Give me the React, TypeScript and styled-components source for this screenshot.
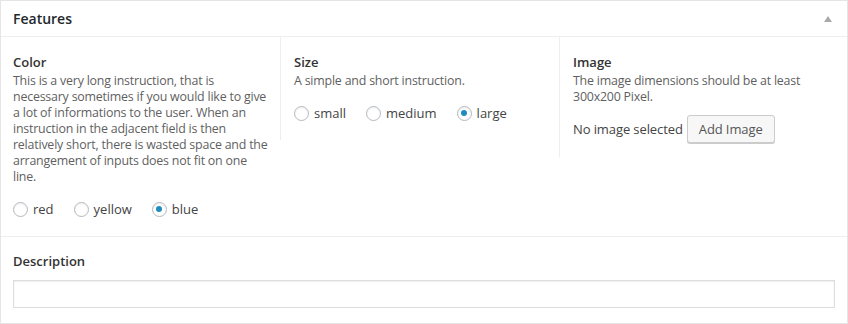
import styled, { createGlobalStyle } from "styled-components";

const GlobalStyle = createGlobalStyle`
  html, body {
    margin: 0;
    padding: 0;
    background: #ffffff;
  }
  body {
    font-family: "Open Sans", "Liberation Sans", sans-serif;
    font-size: 13px;
    color: #444;
  }
`;

const Postbox = styled.div`
  width: 848px;
  height: 324px;
  box-sizing: border-box;
  border: 1px solid #e5e5e5;
  background: #fff;
`;

const BoxHeader = styled.div`
  height: 35px;
  border-bottom: 1px solid #eee;
  display: flex;
  align-items: center;
  justify-content: space-between;
  padding: 0 15px 0 12px;
`;

const BoxTitle = styled.h2`
  margin: 0;
  font-size: 14px;
  font-weight: 600;
  color: #23282d;
`;

const Toggle = styled.span`
  width: 0;
  height: 0;
  border-left: 4px solid transparent;
  border-right: 4px solid transparent;
  border-bottom: 6px solid #aaa;
`;

const FieldRow = styled.div`
  display: flex;
  align-items: flex-start;
`;

interface FieldProps {
  $width: number;
  $divider?: boolean;
  $padBottom?: number;
}

const Field = styled.div<FieldProps>`
  box-sizing: border-box;
  width: ${({ $width }) => $width}px;
  padding: 16px 12px ${({ $padBottom }) => ($padBottom !== undefined ? $padBottom : 18)}px 12px;
  border-left: ${({ $divider }) => ($divider ? "1px solid #eee" : "none")};
  padding-left: ${({ $divider }) => ($divider ? 13 : 12)}px;
`;

const Label = styled.div`
  font-size: 13px;
  font-weight: 600;
  line-height: 18px;
  color: #333;
  margin-bottom: 2px;
`;

const Instruction = styled.p`
  margin: 0;
  font-size: 12.4px;
  line-height: 16px;
  letter-spacing: -0.2px;
  color: #5f5f5f;
`;

const RadioList = styled.ul`
  list-style: none;
  margin: 15px 0 0;
  padding: 0;
  display: flex;
  gap: 20px;
`;

const RadioItem = styled.li`
  display: flex;
  align-items: center;
  gap: 5px;
  line-height: 18px;
  color: #444;
`;

const RadioCircle = styled.span<{ $checked?: boolean }>`
  box-sizing: border-box;
  width: 15px;
  height: 15px;
  border-radius: 50%;
  border: 1px solid #b4b9be;
  box-shadow: inset 0 1px 2px rgba(0, 0, 0, 0.07);
  display: flex;
  align-items: center;
  justify-content: center;
  &::after {
    content: "";
    display: ${({ $checked }) => ($checked ? "block" : "none")};
    width: 6px;
    height: 6px;
    border-radius: 50%;
    background: #1e8cbe;
  }
`;

const ImageRow = styled.div`
  margin-top: 10px;
  display: flex;
  align-items: center;
  gap: 4px;
  color: #444;
  letter-spacing: -0.1px;
`;

const Button = styled.button`
  height: 28px;
  padding: 0 11px;
  font-family: inherit;
  font-size: 13px;
  letter-spacing: -0.1px;
  color: #555;
  background: #f7f7f7;
  border: 1px solid #ccc;
  border-radius: 3px;
  box-shadow: 0 1px 0 #ccc;
`;

const DescriptionSection = styled.div`
  border-top: 1px solid #eee;
  padding: 15px 12px 14px;
`;

const TextInput = styled.input`
  display: block;
  box-sizing: border-box;
  width: 100%;
  height: 28px;
  margin-top: 10px;
  border: 1px solid #ddd;
  box-shadow: inset 0 1px 2px rgba(0, 0, 0, 0.07);
  background: #fff;
`;

const Radios = ({ options, selected }: { options: string[]; selected: string }) => (
  <RadioList>
    {options.map((option) => (
      <RadioItem key={option}>
        <RadioCircle $checked={option === selected} />
        {option}
      </RadioItem>
    ))}
  </RadioList>
);

function App() {
  return (
    <>
      <GlobalStyle />
      <Postbox>
        <BoxHeader>
          <BoxTitle>Features</BoxTitle>
          <Toggle />
        </BoxHeader>
        <FieldRow>
          <Field $width={279}>
            <Label>Color</Label>
            <Instruction>
              This is a very long instruction, that is necessary sometimes if you would like to give a lot of
              informations to the user. When an instruction in the adjacent field is then relatively short, there is
              wasted space and the arrangement of inputs does not fit on one line.
            </Instruction>
            <Radios options={["red", "yellow", "blue"]} selected="blue" />
          </Field>
          <Field $width={279} $divider>
            <Label>Size</Label>
            <Instruction>A simple and short instruction.</Instruction>
            <Radios options={["small", "medium", "large"]} selected="large" />
          </Field>
          <Field $width={288} $divider $padBottom={14}>
            <Label>Image</Label>
            <Instruction>The image dimensions should be at least 300x200 Pixel.</Instruction>
            <ImageRow>
              No image selected
              <Button type="button">Add Image</Button>
            </ImageRow>
          </Field>
        </FieldRow>
        <DescriptionSection>
          <Label>Description</Label>
          <TextInput type="text" />
        </DescriptionSection>
      </Postbox>
    </>
  );
}

export default App;
